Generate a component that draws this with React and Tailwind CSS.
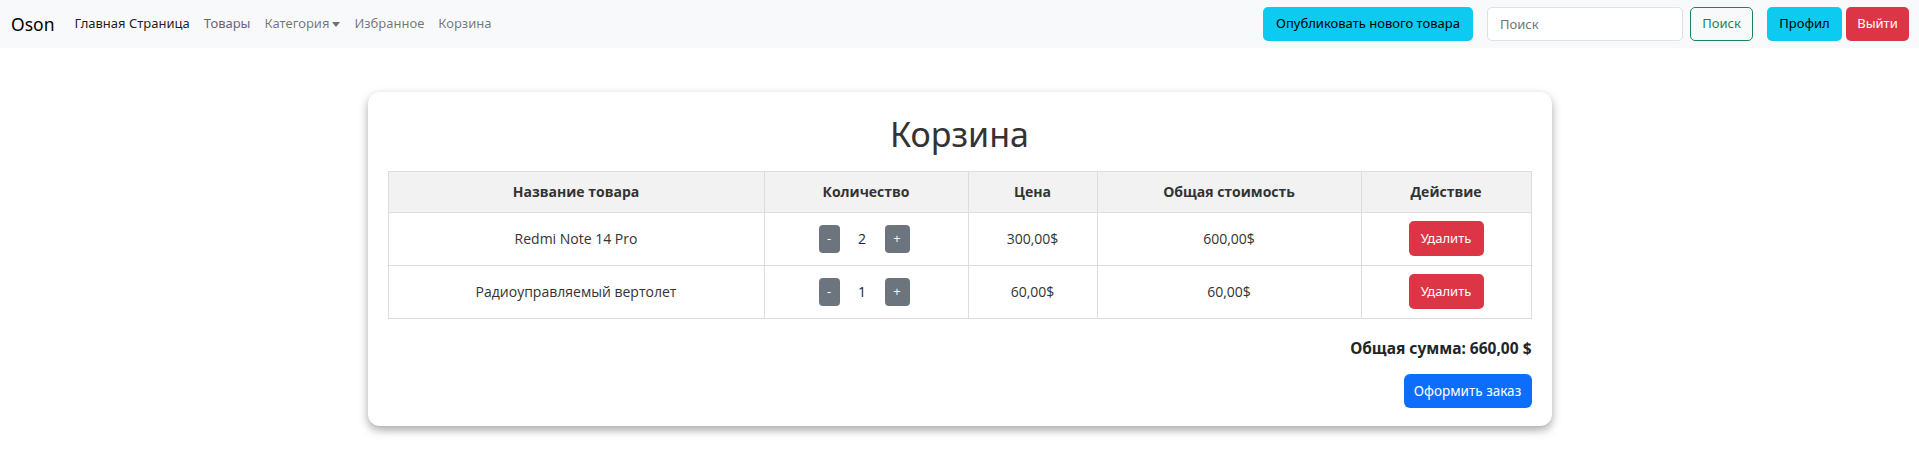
import React from "react";

const items = [
  { id: 1, name: "Redmi Note 14 Pro", qty: 2, price: "300,00$", total: "600,00$" },
  { id: 2, name: "Радиоуправляемый вертолет", qty: 1, price: "60,00$", total: "60,00$" },
];

const ui = { fontFamily: '"Noto Sans", "Open Sans", sans-serif' };
const body = { fontFamily: '"Open Sans", "Noto Sans", sans-serif' };

function Navbar() {
  return (
    <nav className="h-12 bg-[#f8f9fa] flex items-center pl-[11px] pr-[10px] text-[13px]" style={ui}>
      <span className="text-[17.5px] text-black mr-[13px]">Oson</span>
      <a className="px-[7px] text-black/90">Главная Страница</a>
      <a className="px-[7px] text-[#6e6276]">Товары</a>
      <a className="px-[7px] text-black/55 flex items-center">
        Категория
        <span className="ml-[3px] border-x-[4px] border-t-[5px] border-x-transparent border-t-black/55" />
      </a>
      <a className="px-[7px] text-black/55">Избранное</a>
      <a className="px-[7px] text-black/55">Корзина</a>

      <div className="ml-auto flex items-center">
        <button className="h-[34px] w-[210px] rounded-[5px] bg-[#0dcaf0] text-black">
          Опубликовать нового товара
        </button>
        <input
          placeholder="Поиск"
          className="ml-[14px] h-[34px] w-[196px] px-3 rounded-[5px] border border-[#dee2e6] bg-white text-black placeholder:text-[#6c757d] outline-none"
        />
        <button className="ml-[7px] h-[34px] w-[63px] rounded-[5px] border border-[#198754] text-[#198754]">
          Поиск
        </button>
        <button className="ml-[14px] h-[34px] w-[75px] rounded-[5px] bg-[#0dcaf0] text-black">
          Профил
        </button>
        <button className="ml-[4px] h-[34px] w-[63px] rounded-[5px] bg-[#dc3545] text-white">
          Выйти
        </button>
      </div>
    </nav>
  );
}

function QtyControl({ qty }) {
  return (
    <div className="flex items-center justify-center pr-[4px]">
      <button className="w-[21px] h-[28px] rounded-[4px] bg-[#6c757d] text-white text-[13px] leading-none">-</button>
      <span className="w-[45px] text-center text-[#212529]">{qty}</span>
      <button className="w-[25px] h-[28px] rounded-[4px] bg-[#6c757d] text-white text-[13px] leading-none">+</button>
    </div>
  );
}

export default function App() {
  return (
    <div className="min-h-screen bg-white">
      <Navbar />

      <div className="w-[1184px] mx-auto mt-[44px] bg-white rounded-xl shadow-[0_4px_10px_rgba(0,0,0,0.35)] px-5 pt-[22px] pb-[18px]">
        <h1 className="text-center text-[34px] leading-[1.2] text-[#333] mb-[16px]" style={ui}>
          Корзина
        </h1>

        <table className="w-full border-collapse text-[14px] text-[#333]" style={body}>
          <thead>
            <tr className="h-[41px] bg-[#f2f2f2]">
              <th className="w-[376px] border border-[#ddd] font-bold">Название товара</th>
              <th className="w-[204px] border border-[#ddd] font-bold">Количество</th>
              <th className="w-[129px] border border-[#ddd] font-bold">Цена</th>
              <th className="w-[264px] border border-[#ddd] font-bold">Общая стоимость</th>
              <th className="border border-[#ddd] font-bold">Действие</th>
            </tr>
          </thead>
          <tbody>
            {items.map((it) => (
              <tr key={it.id} className="h-[53px] text-center">
                <td className="border border-[#ddd]">{it.name}</td>
                <td className="border border-[#ddd]">
                  <QtyControl qty={it.qty} />
                </td>
                <td className="border border-[#ddd]">{it.price}</td>
                <td className="border border-[#ddd]">{it.total}</td>
                <td className="border border-[#ddd]">
                  <button className="h-[35px] w-[75px] rounded-[5px] bg-[#dc3545] text-white text-[13px]" style={ui}>
                    Удалить
                  </button>
                </td>
              </tr>
            ))}
          </tbody>
        </table>

        <div className="mt-[18px] text-right text-[15.5px] font-bold text-[#212529]" style={ui}>
          Общая сумма: 660,00 $
        </div>
        <div className="mt-[14px] flex justify-end">
          <button className="h-[34px] w-[128px] rounded-[6px] bg-[#0d6efd] text-white text-[13.5px]" style={ui}>
            Оформить заказ
          </button>
        </div>
      </div>
    </div>
  );
}
